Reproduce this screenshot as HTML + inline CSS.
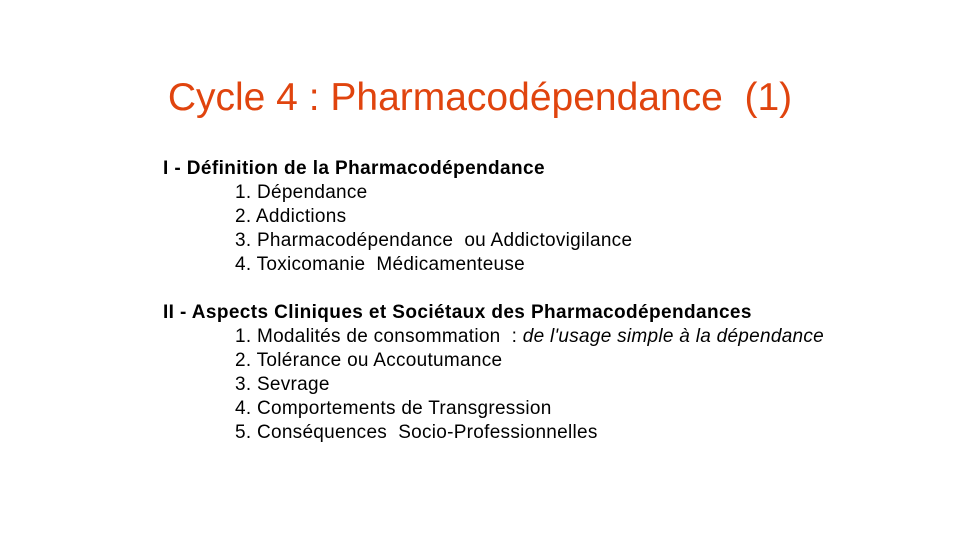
<!DOCTYPE html>
<html><head><meta charset="utf-8"><style>
body{margin:0;width:960px;height:540px;background:#fff;font-family:"Liberation Sans",sans-serif;position:relative;overflow:hidden}
.t{position:absolute;left:0;width:960px;top:76px;text-align:center;color:#E0440E;font-size:39px;white-space:pre;line-height:44px}
.l{position:absolute;font-size:19px;letter-spacing:0.28px;color:#000;white-space:pre;line-height:24px}
b{font-weight:bold;letter-spacing:0.4px}
</style></head><body>
<div class="t">Cycle 4 : Pharmacodépendance  (1)</div>
<div class="l" style="left:163px;top:157px"><b>I - Définition de la Pharmacodépendance</b></div>
<div class="l" style="left:235px;top:181px">1. Dépendance
2. Addictions
3. Pharmacodépendance  ou Addictovigilance
4. Toxicomanie  Médicamenteuse</div>
<div class="l" style="left:163px;top:301px"><b>II - Aspects Cliniques et Sociétaux des Pharmacodépendances</b></div>
<div class="l" style="left:235px;top:325px">1. Modalités de consommation  : <i>de l'usage simple à la dépendance</i>
2. Tolérance ou Accoutumance
3. Sevrage
4. Comportements de Transgression
5. Conséquences  Socio-Professionnelles</div>
</body></html>
